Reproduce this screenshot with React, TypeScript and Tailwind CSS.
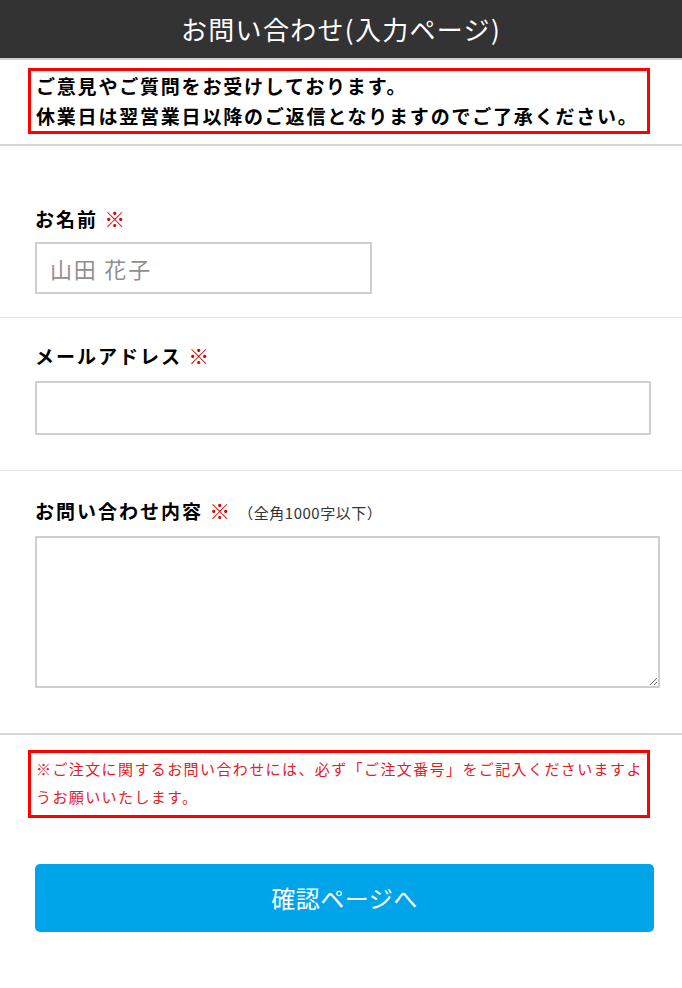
import React from "react";

const font = { fontFamily: '"Noto Sans CJK JP", "Noto Sans", sans-serif' };

export default function App() {
  return (
    <div className="w-[682px] min-h-[988px] bg-white text-black" style={font}>
      <header className="h-[60px] bg-[#333333] border-b-2 border-[#cfcfcf] flex items-center justify-center">
        <h1 className="text-white text-[26px] leading-none font-normal tracking-[1.3px]">お問い合わせ(入力ページ)</h1>
      </header>

      <div className="px-[28px] pt-[8px] pb-[10px] border-b-2 border-[#d6d6d6]">
        <div className="w-[622px] border-[3px] border-[#ff0000] px-[5px] text-[19px] leading-[30px] font-bold tracking-[1.8px] whitespace-nowrap">
          <p>ご意見やご質問をお受けしております。</p>
          <p>休業日は翌営業日以降のご返信となりますのでご了承ください。</p>
        </div>
      </div>

      <section className="px-[35px] pt-[59px] pb-[23px] border-b border-[#e3e3e3]">
        <label className="block text-[19px] leading-[26px] font-bold tracking-[2px]">
          お名前 <span className="text-[#d40000] text-[21px]">※</span>
        </label>
        <input
          className="mt-[10px] block w-[337px] h-[52px] border-2 border-[#cfcfcf] px-[13px] text-[22px] tracking-[1.8px] placeholder:text-[#8f8f8f] outline-none"
          placeholder="山田 花子"
          style={font}
        />
      </section>

      <section className="px-[35px] pt-[24px] pb-[35px] border-b border-[#e3e3e3]">
        <label className="block text-[19px] leading-[26px] font-bold tracking-[2px]">
          メールアドレス <span className="text-[#d40000] text-[21px]">※</span>
        </label>
        <input
          className="mt-[12px] block w-[616px] h-[54px] border-2 border-[#cfcfcf] px-[13px] text-[20px] outline-none"
          style={font}
        />
      </section>

      <section className="px-[35px] pt-[26px] pb-[45px] border-b-2 border-[#d6d6d6]">
        <label className="block text-[19px] leading-[26px] font-bold tracking-[2px]">
          お問い合わせ内容 <span className="text-[#d40000] text-[21px]">※</span>
          <span className="ml-[6px] text-[15px] font-normal text-[#333] tracking-[0.5px]">（全角1000字以下）</span>
        </label>
        <textarea
          className="mt-[10px] block w-[625px] h-[152px] border-2 border-[#cfcfcf] p-[10px] text-[16px] outline-none"
          style={font}
        />
      </section>

      <div className="px-[28px] pt-[15px]">
        <div className="w-[622px] border-[3px] border-[#ff0000] pl-[5px] pr-[2px] pt-[2px] pb-[4px] text-[15px] leading-[28px] tracking-[1.4px] text-[#e0202a]">
          ※ご注文に関するお問い合わせには、必ず「ご注文番号」をご記入くださいますようお願いいたします。
        </div>
      </div>

      <div className="px-[35px] pt-[46px] pb-[55px]">
        <button
          className="w-[619px] h-[68px] rounded-[5px] bg-[#00a4e8] text-white text-[24px] tracking-[0.5px] flex items-center justify-center"
          style={font}
        >
          確認ページへ
        </button>
      </div>
    </div>
  );
}
